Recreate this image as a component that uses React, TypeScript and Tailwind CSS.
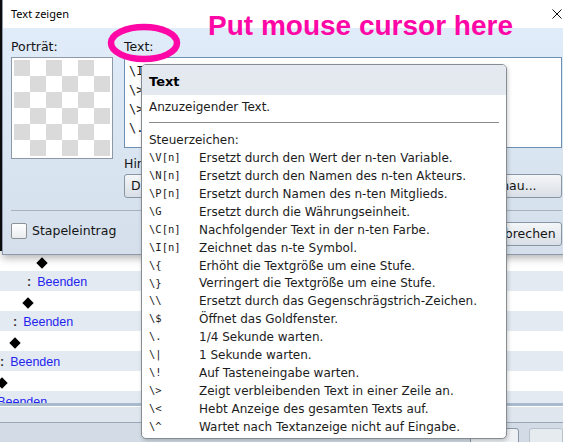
import React from "react";

const codes: [string, string][] = [
  ["\\V[n]", "Ersetzt durch den Wert der n-ten Variable."],
  ["\\N[n]", "Ersetzt durch den Namen des n-ten Akteurs."],
  ["\\P[n]", "Ersetzt durch Namen des n-ten Mitglieds."],
  ["\\G", "Ersetzt durch die Währungseinheit."],
  ["\\C[n]", "Nachfolgender Text in der n-ten Farbe."],
  ["\\I[n]", "Zeichnet das n-te Symbol."],
  ["\\{", "Erhöht die Textgröße um eine Stufe."],
  ["\\}", "Verringert die Textgröße um eine Stufe."],
  ["\\\\", "Ersetzt durch das Gegenschrägstrich-Zeichen."],
  ["\\$", "Öffnet das Goldfenster."],
  ["\\.", "1/4 Sekunde warten."],
  ["\\|", "1 Sekunde warten."],
  ["\\!", "Auf Tasteneingabe warten."],
  ["\\>", "Zeigt verbleibenden Text in einer Zeile an."],
  ["\\<", "Hebt Anzeige des gesamten Texts auf."],
  ["\\^", "Wartet nach Textanzeige nicht auf Eingabe."],
];

// event list behind the dialog, scrolled a bit to the right
const listRows = [
  { kind: "diamond", bg: "bg-white", indent: "ml-[36px]" },
  { kind: "end", bg: "bg-[#e3eaf2]", indent: "ml-[27px]" },
  { kind: "diamond", bg: "bg-white", indent: "ml-[22px]" },
  { kind: "end", bg: "bg-[#e3eaf2]", indent: "ml-[13px]" },
  { kind: "diamond", bg: "bg-white", indent: "ml-[9px]" },
  { kind: "end", bg: "bg-[#e3eaf2]", indent: "ml-[0px]" },
  { kind: "diamond", bg: "bg-white", indent: "ml-[-4px]" },
  { kind: "end", bg: "bg-[#e3eaf2]", indent: "ml-[-13px]" },
];

const checker = Array.from({ length: 36 }, (_, i) => (Math.floor(i / 6) + (i % 6)) % 2 === 0);

function Btn({ className, children }: { className: string; children?: React.ReactNode }) {
  return (
    <div
      className={
        "h-[24px] flex items-center justify-center rounded-[3px] border border-[#8995a2] bg-gradient-to-b from-[#f4f6f8] to-[#d9dfe6] text-[#141414] " +
        className
      }
    >
      {children}
    </div>
  );
}

export default function App() {
  return (
    <div className="relative w-[563px] h-[442px] overflow-hidden bg-white font-['DejaVu_Sans',sans-serif]">
      {/* Editor window in the background */}
      <div className="flex flex-col h-full">
        <div className="h-[251px] shrink-0 bg-[#0e0e10]" />
        <div className="h-[152px] shrink-0 overflow-hidden font-['Liberation_Sans',sans-serif] text-[12.5px]">
          {listRows.map((r, i) => (
            <div key={i} className={"h-[20px] flex items-center " + r.bg}>
              {r.kind === "diamond" ? (
                <div className={"w-[12px] h-[12px] flex items-center justify-center mt-[4px] " + r.indent}>
                  <div className="w-[8px] h-[8px] bg-black rotate-45" />
                </div>
              ) : (
                <div className={"flex items-center mt-[2px] " + r.indent}>
                  <span className="text-[#333] font-bold">:</span>
                  <span className="ml-[6px] text-[#2323f0]">Beenden</span>
                </div>
              )}
            </div>
          ))}
        </div>
        <div className="h-[3px] shrink-0 bg-[#a8bace]" />
        <div className="h-[16px] shrink-0 bg-[#dfe6ee] border-t border-white" />
        <div className="h-px shrink-0 bg-[#9aa7b6]" />
        <div className="flex-1 bg-[#d3dce6] flex items-start pt-[5px] pl-[470px] gap-[10px]">
          <div className="w-[57px] h-[22px] rounded-[3px] border border-[#8995a2] bg-[#eef1f4]" />
          <div className="w-[40px] h-[22px] rounded-[3px] border border-[#b7c1cc] bg-[#e6ebf0]" />
        </div>
      </div>

      {/* Dialog "Text zeigen" */}
      <div className="absolute left-[2px] top-0 w-[569px] h-[255px] flex flex-col border-l border-b border-[#8f9bab] shadow-[0_3px_8px_rgba(0,0,0,0.3)]">
        <div className="relative h-[28px] shrink-0 bg-white flex items-center pl-[8px] text-[11px] text-black font-['Noto_Sans',sans-serif]">
          Text zeigen
          <svg className="absolute right-[9px] top-[9px]" width="10" height="10" viewBox="0 0 10 10">
            <path d="M0.5 0.5L9.5 9.5M9.5 0.5L0.5 9.5" stroke="#111" strokeWidth="1" />
          </svg>
        </div>
        <div className="flex-1 flex flex-col bg-gradient-to-b from-[#e1ecfa] to-[#d4dfeb] pl-[8px] pr-[9px] pt-[11px] text-[12.5px] text-[#141414]">
          <div className="flex gap-[11px]">
            <div className="w-[102px] flex flex-col gap-[2px]">
              <div className="h-[16px] leading-[16px]">Porträt:</div>
              <div className="border border-[#8d99a7] bg-white p-[2px]">
                <div className="grid grid-cols-6">
                  {checker.map((g, i) => (
                    <div key={i} className={"h-[16px] " + (g ? "bg-[#dadada]" : "bg-white")} />
                  ))}
                </div>
              </div>
            </div>
            <div className="flex-1 flex flex-col">
              <div className="h-[16px] leading-[16px]">Text:</div>
              <div className="mt-[2px] h-[91px] border border-[#6d8fb3] bg-white pt-[4px] pl-[4px] font-['DejaVu_Sans_Mono',monospace] text-[12px] leading-[19px] text-[#111]">
                <div>\I</div>
                <div>\&gt;</div>
                <div>\&gt;</div>
                <div>\.</div>
              </div>
              <div className="mt-[8px] h-[16px] leading-[16px]">Hintergrund:</div>
              <div className="mt-[2px] flex items-center">
                <Btn className="w-[100px] !justify-start pl-[6px]">Dunkel</Btn>
                <Btn className="ml-auto w-[120px]">Vorschau...</Btn>
              </div>
            </div>
          </div>
          <div className="mt-[12px] h-px bg-[#a7b1bc]" />
          <div className="mt-[11px] flex items-start">
            <div className="mt-[1px] w-[16px] h-[16px] rounded-[2px] border border-[#8e9296] bg-gradient-to-b from-[#ffffff] to-[#e9ecef]" />
            <div className="ml-[5px] h-[18px] leading-[18px]">Stapeleintrag</div>
            <Btn className="ml-auto w-[80px]">Abbrechen</Btn>
          </div>
        </div>
      </div>

      {/* Hover help for the text field */}
      <div className="absolute left-[141px] top-[64px] w-[366px] h-[375px] overflow-hidden rounded-[5px] border border-[#868c93] bg-white text-[12px] text-[#1c1c1c] shadow-[1px_2px_4px_rgba(0,0,0,0.2)]">
        <div className="h-[30px] bg-[#e4e9f0] pl-[7px] pt-[3px] flex items-center font-bold text-[13px] text-black">Text</div>
        <div className="px-[7px]">
          <div className="mt-[3px] h-[18px] leading-[18px]">Anzuzeigender Text.</div>
          <div className="mt-[6px] h-px bg-[#8a8a8a]" />
          <div className="mt-[8px] h-[18px] leading-[18px]">Steuerzeichen:</div>
          {codes.map(([c, d]) => (
            <div key={c} className="flex h-[17.93px] items-center">
              <span className="w-[50px] shrink-0 font-['DejaVu_Sans_Mono',monospace] text-[10.5px]">{c}</span>
              <span>{d}</span>
            </div>
          ))}
        </div>
      </div>

      {/* Annotation */}
      <svg className="absolute left-[104px] top-[22px]" width="80" height="42" viewBox="0 0 80 42">
        <ellipse cx="40" cy="21" rx="33" ry="16" fill="none" stroke="#ff07a6" strokeWidth="6.5" />
      </svg>
      <div className="absolute left-[208px] top-[12px] leading-none text-[28px] font-bold text-[#ff07a6] font-['Liberation_Sans',sans-serif] whitespace-nowrap">
        Put mouse cursor here
      </div>
    </div>
  );
}
